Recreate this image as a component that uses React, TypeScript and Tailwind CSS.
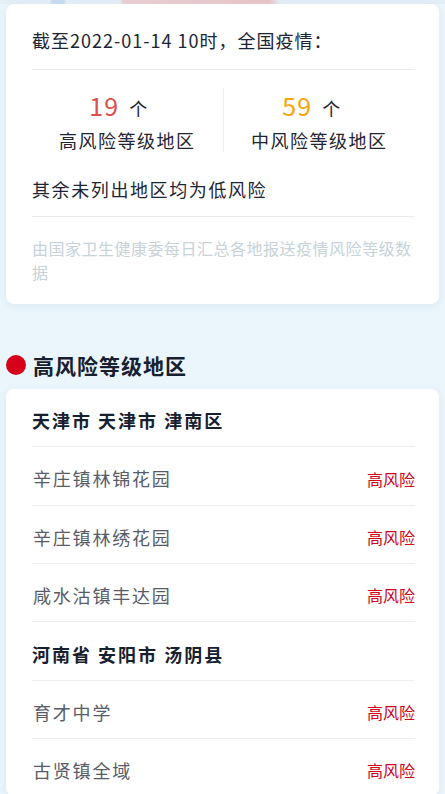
import React from "react";

const font = { fontFamily: '"Noto Sans CJK SC", "Noto Sans", sans-serif' };

type Row = { name: string };
const groups: { title: string; rows: Row[] }[] = [
  {
    title: "天津市 天津市 津南区",
    rows: [{ name: "辛庄镇林锦花园" }, { name: "辛庄镇林绣花园" }, { name: "咸水沽镇丰达园" }],
  },
  {
    title: "河南省 安阳市 汤阴县",
    rows: [{ name: "育才中学" }, { name: "古贤镇全域" }],
  },
];

export default function App() {
  return (
    <div className="w-[445px] h-[794px] overflow-hidden bg-[#eaf5fc]" style={font}>
      <div className="h-[4px] bg-[linear-gradient(90deg,#e4eef7_0,#e4eef7_50px,#c9dcf0_52px,#c9dcf0_64px,#e4eef7_66px,#e4eef7_120px,#ead0d3_123px,#e8c6c9_270px,#e4eef7_280px)]" />
      <div className="mx-[6px] bg-white rounded-[8px] pl-[26px] pr-[24px] shadow-[0_2px_8px_rgba(60,100,140,0.08)]">
        <div className="pt-[24px] pb-[17px] text-[18px] leading-[24px] text-[#1d2433] tracking-[1px]">
          截至2022-01-14 10时，全国疫情：
        </div>
        <div className="h-px bg-[#e9ecef]" />
        <div className="pt-[18px] grid grid-cols-2">
          <div className="flex flex-col items-center border-r border-[#eceff2]">
            <div className="h-[36px] flex items-center pr-[18px]">
              <span className="text-[25px] text-[#de4f4a] tracking-[1px]">19</span>
              <span className="text-[18px] text-[#1d2433] ml-[10px] mt-[4px]">个</span>
            </div>
            <div className="mt-[4px] h-[24px] leading-[24px] text-[18px] text-[#1d2433] tracking-[1.5px]">高风险等级地区</div>
          </div>
          <div className="flex flex-col items-center">
            <div className="h-[36px] flex items-center pr-[16px]">
              <span className="text-[25px] text-[#f6a60a] tracking-[1px]">59</span>
              <span className="text-[18px] text-[#1d2433] ml-[10px] mt-[4px]">个</span>
            </div>
            <div className="mt-[4px] h-[24px] leading-[24px] text-[18px] text-[#1d2433] tracking-[1.5px]">中风险等级地区</div>
          </div>
        </div>
        <div className="mt-[25px] pb-[15px] text-[18px] leading-[24px] text-[#1d2433] tracking-[1.6px]">
          其余未列出地区均为低风险
        </div>
        <div className="h-px bg-[#e9ecef]" />
        <div className="pt-[19px] pb-[20px] text-[16px] leading-[24px] text-[#c7d2d9] tracking-[0.5px]">
          由国家卫生健康委每日汇总各地报送疫情风险等级数据
        </div>
      </div>

      <div className="mt-[47px] mb-[10px] flex items-center h-[28px]">
        <div className="ml-[6px] w-[20px] h-[20px] rounded-full bg-[#d7001a]" />
        <div className="ml-[7px] text-[21px] font-bold text-[#16202e] tracking-[1px] leading-[28px]">高风险等级地区</div>
      </div>

      <div className="mx-[6px] bg-white rounded-[8px] pl-[26px] pr-[24px] shadow-[0_2px_8px_rgba(60,100,140,0.08)]">
        {groups.map((g, gi) => (
          <div key={gi}>
            <div
              className={
                gi > 0
                  ? "h-[59px] pt-[6px] border-t border-[#eceef0] flex items-center text-[18px] font-bold text-[#16202e] tracking-[2px]"
                  : "h-[57px] pt-[6px] flex items-center text-[18px] font-bold text-[#16202e] tracking-[2px]"
              }
            >
              {g.title}
            </div>
            {g.rows.map((r, ri) => (
              <div
                key={ri}
                className={
                  gi === 0 && ri === 0
                    ? "h-[59px] pt-[5px] border-t border-[#eceef0] flex items-center justify-between"
                    : "h-[58px] pt-[5px] border-t border-[#eceef0] flex items-center justify-between"
                }
              >
                <span className="text-[18px] text-[#575c68] tracking-[1.8px] pl-[1px]">{r.name}</span>
                <span className="text-[16px] text-[#d0021b]">高风险</span>
              </div>
            ))}
          </div>
        ))}
      </div>
    </div>
  );
}
